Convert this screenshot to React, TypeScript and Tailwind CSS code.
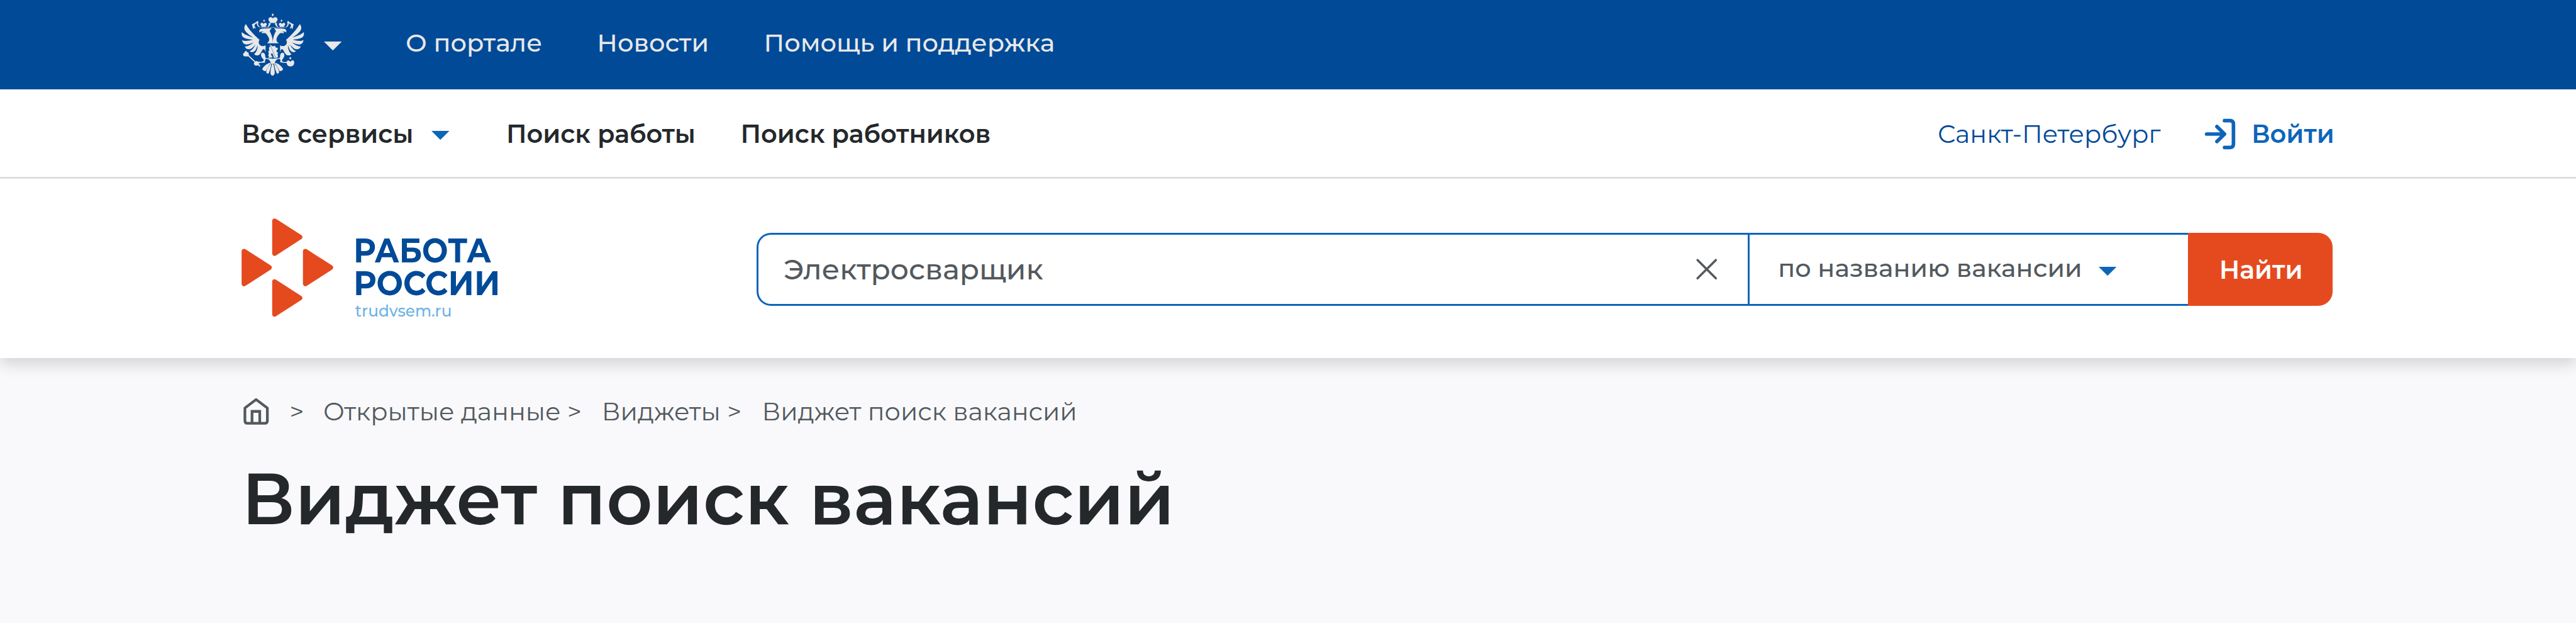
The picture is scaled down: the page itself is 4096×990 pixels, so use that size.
import React from "react";

function EagleHalf() {
  return (
    <g>
      {/* wing feathers */}
      <path d="M59 98 C50 108 47 120 49 131 C54 152 84 172 106 188 C78 178 45 168 32 152 C28 166 31 176 38 184 C52 198 82 201 106 203 C80 211 50 216 34 205 C34 221 42 230 55 234 C74 238 94 229 110 222 C95 236 70 250 52 248 C56 262 68 269 82 267 C100 264 114 246 124 235 C116 252 102 272 84 279 C92 290 106 289 116 281 C130 269 133 250 138 238 C138 262 132 284 114 300 C124 311 142 311 151 302 C164 289 168 268 178 266 C184 268 187 274 189 282 L190 242 C176 250 160 246 151 236 C142 226 144 213 151 204 C122 178 80 138 59 98 Z" />
      {/* crown ribbon */}
      <path d="M98 102 C108 92 124 92 136 77 C143 79 145 87 141 92 C139 104 146 115 157 121 C141 120 131 107 133 93 C123 96 114 104 118 113 L124 122 L120 131 L114 119 L109 132 C101 124 108 112 98 102 Z" />
      {/* side crown */}
      <path d="M181 67 L188 75 L181 83 L174 75 Z" />
      <path d="M157 95 C163 87 174 89 178 98 C184 86 196 88 199 98 C200 107 192 108 192 117 H164 C164 108 154 106 157 95 Z" />
      <path d="M211 90 C215 108 206 119 192 120 C206 122 221 114 226 94 Z" />
      {/* head and neck */}
      <path d="M149 149 C147 139 152 132 164 130 C186 127 214 129 232 126 C226 136 218 138 219 147 C229 164 239 190 240 224 L203 225 C217 215 217 200 211 187 C201 168 187 151 167 149 C156 149 152 152 149 155 Z" />
      <path d="M164 154 C173 148 184 150 191 161 C184 158 172 158 168 161 Z" />
    </g>
  );
}

function Eagle() {
  return (
    <svg viewBox="0 0 480 465" className="h-[110.2px] w-[113.8px] shrink-0" fill="#e8e8e8">
      <EagleHalf />
      <g transform="translate(479 0) scale(-1 1)">
        <EagleHalf />
      </g>
      <path d="M239 25 C241 31 246 33 246 36 C246 40 241 41 239 47 C237 41 232 40 232 36 C232 33 237 31 239 25 Z" />
      <path d="M211 64 C214 49 234 48 240 61 C246 48 268 49 271 64 C273 77 261 79 260 91 L221 91 C220 79 208 76 211 64 Z" />
      <path d="M158 118 H322 V120 H158 Z" />
      {/* shield with rider */}
      <path d="M189 242 H191 V285 H189 Z M288 242 H290 V285 H288 Z M203 224 H278 V227 H203 Z" />
      <path d="M219 233 L258 325 L248 325 L236 293 L227 299 L231 311 L240 322 L209 325 L214 313 L208 308 L213 298 L209 282 L216 274 L213 260 L220 247 L225 254 L218 236 Z" />
      <path d="M222 236 L240 248 L254 243 L258 254 L273 258 L271 272 L264 272 L266 286 L276 290 L270 302 L275 312 L271 323 L260 325 Z" />
      {/* legs */}
      <path d="M164 292 C182 286 190 300 190 322 C198 331 214 327 239 331 C264 327 281 331 288 322 C288 300 294 286 312 292 C322 306 316 320 306 332 C296 343 302 352 320 353 L342 349 L342 360 L318 359 L290 354 C290 344 292 338 286 332 C272 328 260 340 253 354 L252 364 H226 L225 354 C218 340 206 328 192 332 C186 338 188 346 187 357 L158 358 L142 362 L138 350 L160 351 C176 350 182 342 176 333 C162 322 156 306 164 292 Z" />
      {/* sceptre */}
      <path d="M40 302 C38 296 42 292 48 292 C48 284 54 279 62 276 C62 284 70 288 76 288 L79 305 L84 312 L122 348 C132 341 146 351 145 364 L156 379 L151 384 L139 373 C126 381 112 375 112 361 L117 353 L76 315 C66 312 62 320 54 313 C48 316 40 312 40 302 Z" />
      {/* orb */}
      <path d="M357 319 L365 327 L357 336 L349 327 Z" />
      <path d="M334 352 L337 343 L346 342 L357 350 L368 342 L377 341 L383 351 C386 370 374 382 358 382 C342 382 330 370 334 352 Z" />
      {/* tail */}
      <path d="M239 356 C250 388 253 412 252 428 C250 438 244 443 238 444 C231 443 225 438 224 428 C223 412 227 388 239 356 Z" />
      <path d="M231 357 C226 386 221 410 212 428 C206 433 198 430 195 420 C198 400 212 378 231 357 Z M247 357 C252 386 257 410 266 428 C272 433 280 430 282 420 C279 400 265 378 247 357 Z" />
      <path d="M226 357 C212 378 202 396 194 412 C186 416 176 412 168 401 C180 380 200 362 226 357 Z M252 357 C266 378 276 396 284 412 C292 416 302 412 309 401 C297 380 278 362 252 357 Z" />
    </svg>
  );
}

function Caret({ className }: { className: string }) {
  return (
    <svg viewBox="0 0 40 20" className={`h-[14.2px] w-[28.4px] shrink-0 ${className}`} fill="currentColor">
      <path d="M0 0 H40 L20 20 Z" />
    </svg>
  );
}

function Triangles() {
  const tri = "M9 5.5 L65.5 41.7 L9 78 Z";
  return (
    <svg
      viewBox="540 487.5 209 220"
      className="h-[156.4px] w-[148.6px] shrink-0"
      fill="#e54a1f"
      stroke="#e54a1f"
      strokeWidth="11"
      strokeLinejoin="round"
    >
      <path transform="translate(536.7 555.7)" d={tri} />
      <path transform="translate(605.1 487.7)" d={tri} />
      <path transform="translate(673.9 555.7)" d={tri} />
      <path transform="translate(605.1 623.7)" d={tri} />
    </svg>
  );
}

export default function App() {
  return (
    <div className="h-[990px] w-[4096px] overflow-hidden bg-[#f9f9fb] font-['Montserrat','Inter',sans-serif] text-[39.82px] leading-[48px] whitespace-nowrap text-[#24282b]">
      <header className="relative h-[569px] bg-white shadow-[0_11.4px_22.8px_rgba(0,0,0,0.15)]">
        <div className="flex h-[142.2px] items-center bg-[#004a98] pb-[5.6px] pl-[377px] font-medium text-[#e8e8e8]">
          <div className="flex w-[268px] items-center gap-[24px] pt-[3px]">
            <Eagle />
            <Caret className="mt-[6px]" />
          </div>
          <a className="w-[304.3px]">О портале</a>
          <a className="w-[265.3px]">Новости</a>
          <a>Помощь и поддержка</a>
        </div>

        <div className="flex h-[142.2px] items-center border-b-[3px] border-[#dce0e3] pt-[3px] pl-[384px] font-semibold">
          <div className="flex w-[421px] items-center">
            <span className="w-[301.5px]">Все сервисы</span>
            <Caret className="mt-[3px] text-[#0d65ba]" />
          </div>
          <a className="w-[372.6px]">Поиск работы</a>
          <a className="w-[1903.3px]">Поиск работников</a>
          <a className="w-[422px] font-normal text-[#004a98]">Санкт-Петербург</a>
          <a className="flex items-center gap-[23px] text-[#0d65ba]">
            <svg
              viewBox="4926 262 76 76"
              className="h-[54px] w-[54px]"
              fill="none"
              stroke="currentColor"
              strokeWidth="8"
              strokeLinecap="round"
              strokeLinejoin="round"
            >
              <path d="M4934 300 H4974 M4957 283.3 L4974 300 L4957 316.7 M4974 270 H4986 Q4994 270 4994 278 V322 Q4994 330 4986 330 H4974" />
            </svg>
            <span>Войти</span>
          </a>
        </div>

        <div className="flex pt-[62.3px] pl-[384px]">
          <div className="flex w-[819.2px]">
            <Triangles />
            <div className="pt-[25.2px] pl-[29px] text-[#004a98]">
              <div className="text-[53.8px] leading-[52.6px] font-bold">
                <div className="w-[245px] origin-left scale-x-[0.915]">РАБОТА</div>
                <div className="w-[245px] origin-left scale-x-[0.937]">РОССИИ</div>
              </div>
              <div className="w-[168px] origin-left scale-x-[0.95] pl-[3px] text-[26px] leading-[34px] font-medium text-[#6cb2e4]">
                trudvsem.ru
              </div>
            </div>
          </div>

          <div className="mt-[23px] flex h-[116.6px]">
            <div className="flex w-[2275.6px] rounded-l-[22.8px] border-y-[3px] border-l-[3px] border-[#0d65ba] font-medium text-[#53595e]">
              <div className="flex w-[1576px] items-center justify-between border-r-[3px] border-[#0d65ba] pr-[48px] pl-[40px]">
                <span className="text-[45.51px]">Электросварщик</span>
                <svg
                  viewBox="0 0 50 50"
                  className="h-[35.5px] w-[35.5px]"
                  fill="none"
                  stroke="currentColor"
                  strokeWidth="5"
                  strokeLinecap="round"
                >
                  <path d="M4.5 4.5 L45.5 45.5 M45.5 4.5 L4.5 45.5" />
                </svg>
              </div>
              <div className="flex items-center pb-[3px] pl-[45px]">
                <span className="w-[509.5px]">по названию вакансии</span>
                <Caret className="mt-[9px] text-[#0d65ba]" />
              </div>
            </div>
            <button className="flex w-[230.4px] items-center rounded-r-[22.8px] bg-[#e54a1f] pt-[3px] pl-[50px] font-semibold text-white">
              Найти
            </button>
          </div>
        </div>
      </header>

      <nav className="flex items-center pt-[61px] pl-[385.8px] text-[#53595e]">
        <svg
          viewBox="543 888 60 64"
          className="h-[45.5px] w-[42.7px] shrink-0"
          fill="none"
          stroke="currentColor"
          strokeWidth="6"
          strokeLinejoin="round"
        >
          <path d="M547.8 912.5 L572.8 893.5 L598 912.5 V941 Q598 946.5 592.5 946.5 H553.3 Q547.8 946.5 547.8 941 Z" />
          <path d="M563.7 946 V920 H581 V946" strokeLinejoin="miter" />
        </svg>
        <span className="w-[85.5px] pl-[32px]">&gt;</span>
        <span className="w-[442.7px]">Открытые данные &gt;</span>
        <span className="w-[254.8px]">Виджеты &gt;</span>
        <span>Виджет поиск вакансий</span>
      </nav>
      <h1 className="pt-[45px] pl-[384px] text-[113.78px] leading-[139px] font-semibold tracking-[0.25px]">
        Виджет поиск вакансий
      </h1>
    </div>
  );
}
